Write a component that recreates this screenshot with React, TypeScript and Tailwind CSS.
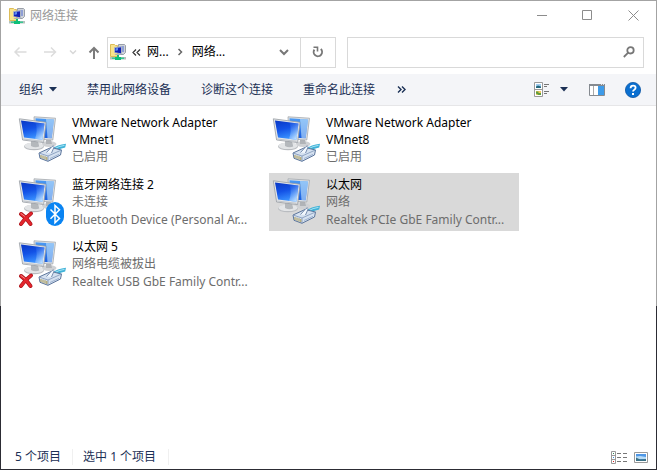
import React, { useState } from 'react';

type Overlay = 'cable' | 'bluetooth';

interface Connection {
  id: string;
  name: string;
  status: string;
  device?: string;
  overlay: Overlay;
  offline?: boolean;
}

const connections: Connection[] = [
  { id: 'vmnet1', name: 'VMware Network Adapter VMnet1', status: '已启用', overlay: 'cable' },
  { id: 'vmnet8', name: 'VMware Network Adapter VMnet8', status: '已启用', overlay: 'cable' },
  {
    id: 'bluetooth',
    name: '蓝牙网络连接 2',
    status: '未连接',
    device: 'Bluetooth Device (Personal Ar...',
    overlay: 'bluetooth',
    offline: true
  },
  {
    id: 'ethernet',
    name: '以太网',
    status: '网络',
    device: 'Realtek PCIe GbE Family Contr...',
    overlay: 'cable'
  },
  {
    id: 'ethernet5',
    name: '以太网 5',
    status: '网络电缆被拔出',
    device: 'Realtek USB GbE Family Contr...',
    overlay: 'cable',
    offline: true
  }
];

const commands = ['禁用此网络设备', '诊断这个连接', '重命名此连接'];

const FolderIcon = () => (
  <svg width="16" height="16" viewBox="0 0 16 16" className="shrink-0">
    <path d="M.5.500h4l1 1h2v11h-7z" fill="#f9e48c" stroke="#dcbc58" />
    <path d="M8.500.500h6l1 1v7l-2 2h-5z" fill="#cfd3d9" stroke="#999fa8" />
    <path d="M10 2h4v6h-4z" fill="#8f9fd6" />
    <path d="M4.500 3.500l7-1v7l-7-1z" fill="#c9d6ee" stroke="#a9b3c4" />
    <path d="M5 4l6-.8v6L5 8.300z" fill="#1220b4" />
    <path d="M5.500 4.200l2.500-.3v2.300l-2.500.8z" fill="#5d8df2" />
    <path d="M5.500 10h5l1 1h-7z" fill="#a9aeb8" />
    <path d="M0 13h16v2.500H0z" fill="#b4c2bc" />
    <path d="M2 13.500h12v1.500H2z" fill="#38c792" />
    <path d="M7 11h2v2h2v3H5v-3h2z" fill="#0fbf78" />
  </svg>
);

const Monitors = () => (
  <>
    <ellipse cx="31" cy="29" rx="7.500" ry="3" fill="#cfd1d4" />
    <path d="M28 25h5l1 4h-6z" fill="#b0b3b7" />
    <path d="M16 1.800l21.500 1.400L34.800 25 17 24z" fill="#dfe2e5" stroke="#a3a8ae" strokeWidth="0.8" />
    <path d="M17.500 3.300l18.500 1.200-2.300 18.800L18 22.500z" fill="url(#screenBack)" />
    <path d="M28 4l8 .5-2.300 18.800-4.200-.3z" fill="#c4e4fc" opacity="0.6" />
    <ellipse cx="16" cy="31.500" rx="10" ry="3.800" fill="#b9bcc0" />
    <ellipse cx="16" cy="30.800" rx="9.600" ry="3.300" fill="#e3e5e7" />
    <path d="M13 25l7 1 1.200 5.500q-4.200 1.600-8.200-.5z" fill="#b4b8bc" />
    <path d="M1.300 3.800L28 7.300 25.600 27.600 4.600 25z" fill="#e4e7ea" stroke="#989da3" strokeWidth="0.8" />
    <path d="M3 5.500l23.500 3-2.100 16.200L6 22.500z" fill="url(#screenFront)" />
    <path d="M17.500 7.400l9 1.100-2.100 16.200-7.400-.9q3-8 .5-16.400z" fill="url(#glare)" />
    <path d="M5.200 24l19.400 2.300" stroke="#c1c5ca" strokeWidth="1.200" />
  </>
);

const Cable = () => (
  <g strokeLinejoin="round">
    <path d="M34 34q5-4.200 14-5.200l-.8 3.800q-5 .6-8.200 4z" fill="#3fb2d8" />
    <path d="M36 34q5-3 10.500-3.600" stroke="#a9e4f4" strokeWidth="1" fill="none" />
    <path d="M21 38l12-5.500 10.500 2.500-1 5L30 46.300l-8-3z" fill="#d5e1f0" stroke="#5d769c" strokeWidth="1" />
    <path d="M21 38l9 3v5.300M30 41l13.500-6" fill="none" stroke="#7f96b8" strokeWidth="0.8" />
    <path d="M28.500 37.500l5.500-6q1.500-1.200 2.200.3L33.500 38" fill="#f3f8fd" stroke="#6a81a6" strokeWidth="0.9" />
    <path d="M32 43.500l9-4.200" stroke="#98aecd" strokeWidth="0.9" />
    <path d="M23 40v3M25 40.600v3.200M27 41.200v3.400M28.800 42v3" stroke="#ad9a4e" strokeWidth="1" />
  </g>
);

const Bluetooth = () => (
  <>
    <rect x="28" y="25" width="18" height="24" rx="9" fill="#0a84f2" />
    <path d="M32.500 32.500l9 9-4.500 4.300V28.400l4.500 4.300-9 9" fill="none" stroke="#fff" strokeWidth="1.500" />
  </>
);

const Cross = () => (
  <g strokeLinecap="round">
    <path d="M3 37q6 4 9.500 10M13 36.500Q7 41 3 47" fill="none" stroke="#a90f16" strokeWidth="4" />
    <path d="M3 37q6 4 9.500 10M13 36.500Q7 41 3 47" fill="none" stroke="#e3262d" strokeWidth="2.600" />
    <path d="M3 36.600l3.500 2.600" stroke="#f98b8b" strokeWidth="1" />
  </g>
);

const ConnectionIcon: React.FC<{ overlay: Overlay; offline?: boolean }> = ({ overlay, offline }) => (
  <svg width="48" height="50" viewBox="0 0 48 50" className="shrink-0">
    <Monitors />
    {overlay === 'cable' ? <Cable /> : <Bluetooth />}
    {offline && <Cross />}
  </svg>
);

// Gradients shared by every connection icon
const IconDefs = () => (
  <svg width="0" height="0" className="absolute">
    <defs>
      <linearGradient id="screenFront" x1="0" y1="0" x2="0.3" y2="1">
        <stop offset="0" stopColor="#0a37c4" />
        <stop offset="0.5" stopColor="#1352e6" />
        <stop offset="1" stopColor="#3a92ff" />
      </linearGradient>
      <linearGradient id="screenBack" x1="0" y1="0" x2="0" y2="1">
        <stop offset="0" stopColor="#4b9af3" />
        <stop offset="1" stopColor="#1a5fe0" />
      </linearGradient>
      <linearGradient id="glare" x1="0" y1="0" x2="0.6" y2="1">
        <stop offset="0.1" stopColor="#3f86f5" stopOpacity="0.2" />
        <stop offset="1" stopColor="#d3ebff" stopOpacity="0.85" />
      </linearGradient>
    </defs>
  </svg>
);

const Caret = () => (
  <svg width="8" height="5" viewBox="0 0 8 5">
    <path d="M0 0h8L4 4.500z" fill="#1b3055" />
  </svg>
);

const TitleBar = () => (
  <header className="flex h-[29px] items-center pl-2">
    <FolderIcon />
    <h1 className="ml-[5px] flex-1 text-[#999]">网络连接</h1>
    <button aria-label="最小化" className="flex h-full w-[45px] items-center justify-center">
      <svg width="11" height="11" viewBox="0 0 11 11" stroke="#8c8c8c">
        <path d="M0 5.500h10" />
      </svg>
    </button>
    <button aria-label="最大化" className="flex h-full w-[45px] items-center justify-center">
      <svg width="11" height="11" viewBox="0 0 11 11" fill="none" stroke="#8c8c8c">
        <path d="M.5.5h9v9h-9z" />
      </svg>
    </button>
    <button aria-label="关闭" className="flex h-full w-[46px] items-center justify-center">
      <svg width="11" height="11" viewBox="0 0 11 11" stroke="#8c8c8c">
        <path d="M.5.5l10 10M10.500.5l-10 10" />
      </svg>
    </button>
  </header>
);

const NavigationBar = () => {
  const [query, setQuery] = useState('');

  return (
    <div className="flex h-11 items-center px-3">
      <button aria-label="后退" className="w-[30px]">
        <svg width="14" height="12" viewBox="0 0 14 12" fill="none" stroke="#dcdcdc" strokeWidth="1.500">
          <path d="M13.500 6H2M6.500 1.500L2 6l4.500 4.500" />
        </svg>
      </button>
      <button aria-label="前进" className="w-[26px]">
        <svg width="14" height="12" viewBox="0 0 14 12" fill="none" stroke="#dcdcdc" strokeWidth="1.500">
          <path d="M1 6h11.500M8 1.500L12.500 6 8 10.500" />
        </svg>
      </button>
      <button aria-label="最近浏览的位置" className="w-[19px]">
        <svg width="8" height="5" viewBox="0 0 8 5" fill="none" stroke="#d8d8d8" strokeWidth="1.500">
          <path d="M1 .5l3 3 3-3" />
        </svg>
      </button>
      <button aria-label="上移" className="w-[19px]">
        <svg width="12" height="13" viewBox="0 0 12 13" fill="none" stroke="#7b7b7b" strokeWidth="2">
          <path d="M6 13V2M1.500 6.500L6 2l4.500 4.500" />
        </svg>
      </button>
      <div className="flex h-[31px] w-[229px] items-center border border-[#d9d9d9] pl-0.5">
        <FolderIcon />
        <svg width="9" height="7" viewBox="0 0 9 7" fill="none" stroke="#333" strokeWidth="1.200" className="ml-1.5">
          <path d="M4 .5l-3 3 3 3M8 .5l-3 3 3 3" />
        </svg>
        <button className="ml-1.5 text-black">网...</button>
        <svg width="5" height="8" viewBox="0 0 5 8" fill="none" stroke="#666" strokeWidth="1.500" className="mx-[9px]">
          <path d="M.5 1l3 3-3 3" />
        </svg>
        <button className="flex-1 text-left text-black">网络...</button>
        <button aria-label="以前的位置" className="mr-[11px]">
          <svg width="10" height="7" viewBox="0 0 10 7" fill="none" stroke="#777" strokeWidth="2">
            <path d="M1 1l4 4 4-4" />
          </svg>
        </button>
        <button aria-label="刷新" className="flex h-full w-[35px] items-center justify-center border-l border-[#d9d9d9]">
          <svg width="12" height="12" viewBox="0 0 12 12" fill="none" stroke="#777" strokeWidth="1.900">
            <path d="M2.400 3.600A4.200 4.200 0 1 0 8.800 3" />
            <path d="M1.500 1.200h4v4.300" strokeWidth="1.600" />
          </svg>
        </button>
      </div>
      <div className="ml-[11px] flex h-[31px] flex-1 items-center border border-[#d9d9d9] pr-2">
        <input
          type="search"
          aria-label="搜索网络连接"
          value={query}
          onChange={(e) => setQuery(e.target.value)}
          className="h-full min-w-0 flex-1 px-2 outline-none"
        />
        <svg width="12" height="12" viewBox="0 0 12 12" fill="none" stroke="#777" strokeWidth="1.800">
          <circle cx="7.500" cy="4.300" r="3.200" />
          <path d="M5.200 6.600L.8 11" />
        </svg>
      </div>
    </div>
  );
};

const CommandBar = () => (
  <div className="flex h-8 items-center gap-[30px] border-b border-[#e6e6e8] bg-[#f4f5f8] pr-[15px] pl-[18px] text-[#1b3055]">
    <button className="flex items-center gap-1.5">
      组织
      <Caret />
    </button>
    {commands.map((command) => (
      <button key={command} className="whitespace-nowrap">
        {command}
      </button>
    ))}
    <button aria-label="更多命令" className="-ml-2">
      <svg width="9" height="7" viewBox="0 0 9 7" fill="none" stroke="#1b3055" strokeWidth="1.400">
        <path d="M1 .5l3 3-3 3M5 .5l3 3-3 3" />
      </svg>
    </button>
    <div className="ml-auto flex items-center">
      <button aria-label="更改视图" className="flex items-center gap-2.5">
        <svg width="16" height="16" viewBox="0 0 16 16">
          <path d="M.5.5h8v14h-8zM.5 7.500h8" fill="#fff" stroke="#999" />
          <path d="M2 2h5v4H2z" fill="#9fcdf0" />
          <path d="M2 4.500l2-1 3 1V6H2z" fill="#23677c" />
          <path d="M2 9h5v4H2z" fill="#f0c65c" />
          <path d="M2 9.500h2.500V11H7v2H4.500L2 11.500z" fill="#5e9d3e" />
          <path d="M10 2.500h5M10 4.500h3M10 9.500h5M10 11.500h3" stroke="#777" />
        </svg>
        <Caret />
      </button>
      <button aria-label="显示预览窗格" className="ml-[21px]">
        <svg width="16" height="12" viewBox="0 0 16 12">
          <path d="M.5.5h15v11H.5z" fill="#fff" stroke="#858a90" />
          <path d="M0 1h16" stroke="#858a90" strokeWidth="2" />
          <path d="M4.500 2v9" stroke="#aaa" />
          <path d="M9 2h6v9H9z" fill="#3d9be9" />
          <path d="M12 .5h1M14 .5h1" stroke="#dfe6ee" />
        </svg>
      </button>
      <button aria-label="帮助" className="ml-5">
        <svg width="16" height="16" viewBox="0 0 16 16">
          <circle cx="8" cy="8" r="7.600" fill="#0a6fd0" stroke="#0b55a5" strokeWidth="0.8" />
          <path d="M5.600 6.200q0-2.500 2.500-2.500t2.500 2.100q0 1.200-1.300 1.900T8 9.600" fill="none" stroke="#fff" strokeWidth="1.800" />
          <path d="M7 11h2v2H7z" fill="#fff" />
        </svg>
      </button>
    </div>
  </div>
);

interface ConnectionTileProps {
  connection: Connection;
  selected: boolean;
  onSelect: (id: string) => void;
}

const ConnectionTile: React.FC<ConnectionTileProps> = ({ connection, selected, onSelect }) => (
  <button
    aria-pressed={selected}
    onClick={() => onSelect(connection.id)}
    className={`flex h-[58px] w-[250px] items-center gap-1.5 pr-1 pl-[3px] text-left ${selected ? 'bg-[#d9d9d9]' : ''}`}
  >
    <ConnectionIcon overlay={connection.overlay} offline={connection.offline} />
    <span className="min-w-0 flex-1">
      <span className="block leading-[17px] text-black">{connection.name}</span>
      <span className="block leading-[18px] text-[#6d6d6d]">{connection.status}</span>
      {connection.device && (
        <span className="block leading-[18px] whitespace-nowrap text-[#6d6d6d]">{connection.device}</span>
      )}
    </span>
  </button>
);

const StatusBar: React.FC<{ total: number; selected: number }> = ({ total, selected }) => (
  <footer className="flex h-6 items-center pr-2 pl-3.5 text-[#1b3055]">
    <span className="border-r border-[#f0f0f0] pr-[11px]">{total} 个项目</span>
    <span className="border-r border-[#f0f0f0] pr-3 pl-2.5">选中 {selected} 个项目</span>
    <button aria-label="详细信息" className="ml-auto">
      <svg width="16" height="13" viewBox="0 0 16 13">
        <path d="M.5.5h4v12h-4zM.5 4.500h4M.5 8.500h4" fill="#fff" stroke="#999" />
        <path d="M2 2.500h1" stroke="#2f8a57" />
        <path d="M2 6.500h1" stroke="#3c8fe0" />
        <path d="M2 10.500h1" stroke="#d22" />
        <path d="M6 2.500h4M12 2.500h4M6 6.500h4M12 6.500h4M6 10.500h4M12 10.500h4" stroke="#777" />
      </svg>
    </button>
    <button aria-label="大图标" className="ml-[7px]">
      <svg width="14" height="11" viewBox="0 0 14 11">
        <path d="M.5.5h13v10H.5z" fill="#fff" stroke="#999" />
        <path d="M2 2h10v7H2z" fill="#4f97e6" />
        <path d="M2 4.500l4-.5 6 1v2H2z" fill="#b9dcf6" />
        <path d="M2 5.500l4 2 6-.5v2H2z" fill="#3b7186" />
      </svg>
    </button>
  </footer>
);

const App = () => {
  const [selectedId, setSelectedId] = useState('ethernet');

  return (
    <div className="flex min-h-screen flex-col bg-linear-to-b from-[#a3a3a3] from-65% to-[#2c2c34] to-65% p-px font-['Noto_Sans','Noto_Sans_CJK_SC',sans-serif] text-xs">
      <IconDefs />
      <div className="flex flex-1 flex-col bg-white">
        <TitleBar />
        <NavigationBar />
        <CommandBar />
        <main className="flex flex-1 flex-wrap content-start gap-1 pt-[5px] pl-3.5">
          {connections.map((connection) => (
            <ConnectionTile
              key={connection.id}
              connection={connection}
              selected={connection.id === selectedId}
              onSelect={setSelectedId}
            />
          ))}
        </main>
        <StatusBar total={connections.length} selected={1} />
      </div>
    </div>
  );
};

export default App;
